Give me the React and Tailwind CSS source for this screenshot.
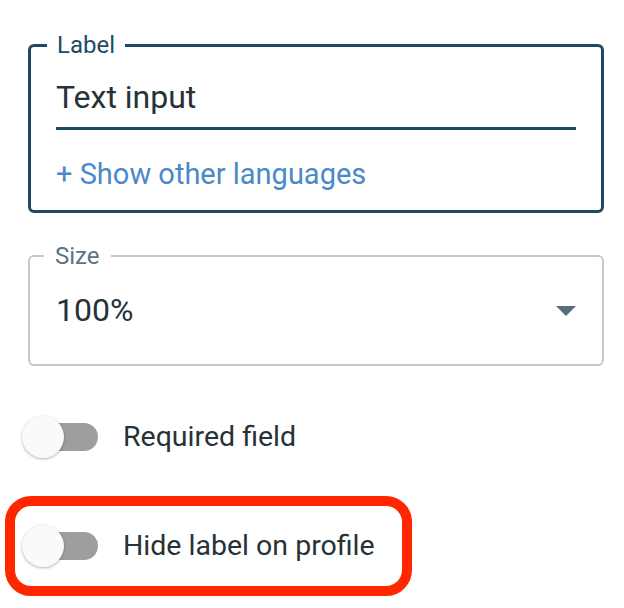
import React from 'react';

const font = { fontFamily: 'Roboto, "Noto Sans", sans-serif' };

// Switch in the off state, material style
const Toggle = ({ label }) => (
  <div className="flex items-center h-[44px]">
    <div className="relative w-[78px] h-[44px] flex items-center">
      <div className="ml-[8px] w-[68px] h-[28px] rounded-full bg-[#9e9e9e]" />
      <div className="absolute left-0 top-[1px] w-[42px] h-[42px] rounded-full bg-[#fafafa] shadow-[0_1px_3px_rgba(0,0,0,0.3)]" />
    </div>
    <span className="ml-[23px] text-[28.5px] text-[#263238] leading-none">{label}</span>
  </div>
);

export default function App() {
  return (
    <div className="w-[624px] h-[608px] bg-white overflow-hidden" style={font}>
      <div className="pt-[34px] pl-[28px] w-[604px]">
        {/* Focused text field */}
        <fieldset className="border-[3px] border-[#1f4a63] rounded-[6px] pl-[25px] pr-[25px] pb-[19px] m-0">
          <legend className="ml-[-9px] px-[10px] text-[24px] leading-[22px] text-[#1f4a63]">Label</legend>
          <div className="text-[32px] leading-[38px] text-[#263238] pt-[22px]">Text input</div>
          <div className="mt-[11px] h-[3px] bg-[#1f4a63]" />
          <div className="mt-[27px] text-[29px] leading-[34px] text-[#4a89c8]">+ Show other languages</div>
        </fieldset>

        {/* Select */}
        <fieldset className="mt-[32px] border-2 border-[#c8c8c8] rounded-[6px] pl-[26px] pr-[26px] m-0 h-[121px]">
          <legend className="ml-[-12px] px-[11px] text-[24px] leading-[22px] text-[#5b7483]">Size</legend>
          <div className="flex items-start justify-between pt-[24px]">
            <span className="text-[32px] leading-[38px] text-[#263238]">100%</span>
            <svg width="20" height="10" viewBox="0 0 20 10" className="mt-[15px]">
              <path d="M0 0 L20 0 L10 10 Z" fill="#546e7a" />
            </svg>
          </div>
        </fieldset>
      </div>

      <div className="pl-[22px] mt-[49px]">
        <Toggle label="Required field" />
      </div>

      <div className="ml-[5px] mt-[37px] w-[407px] h-[100px] border-[10px] border-[#ff2600] rounded-[26px] flex items-center pl-[7px]">
        <Toggle label="Hide label on profile" />
      </div>
    </div>
  );
}
